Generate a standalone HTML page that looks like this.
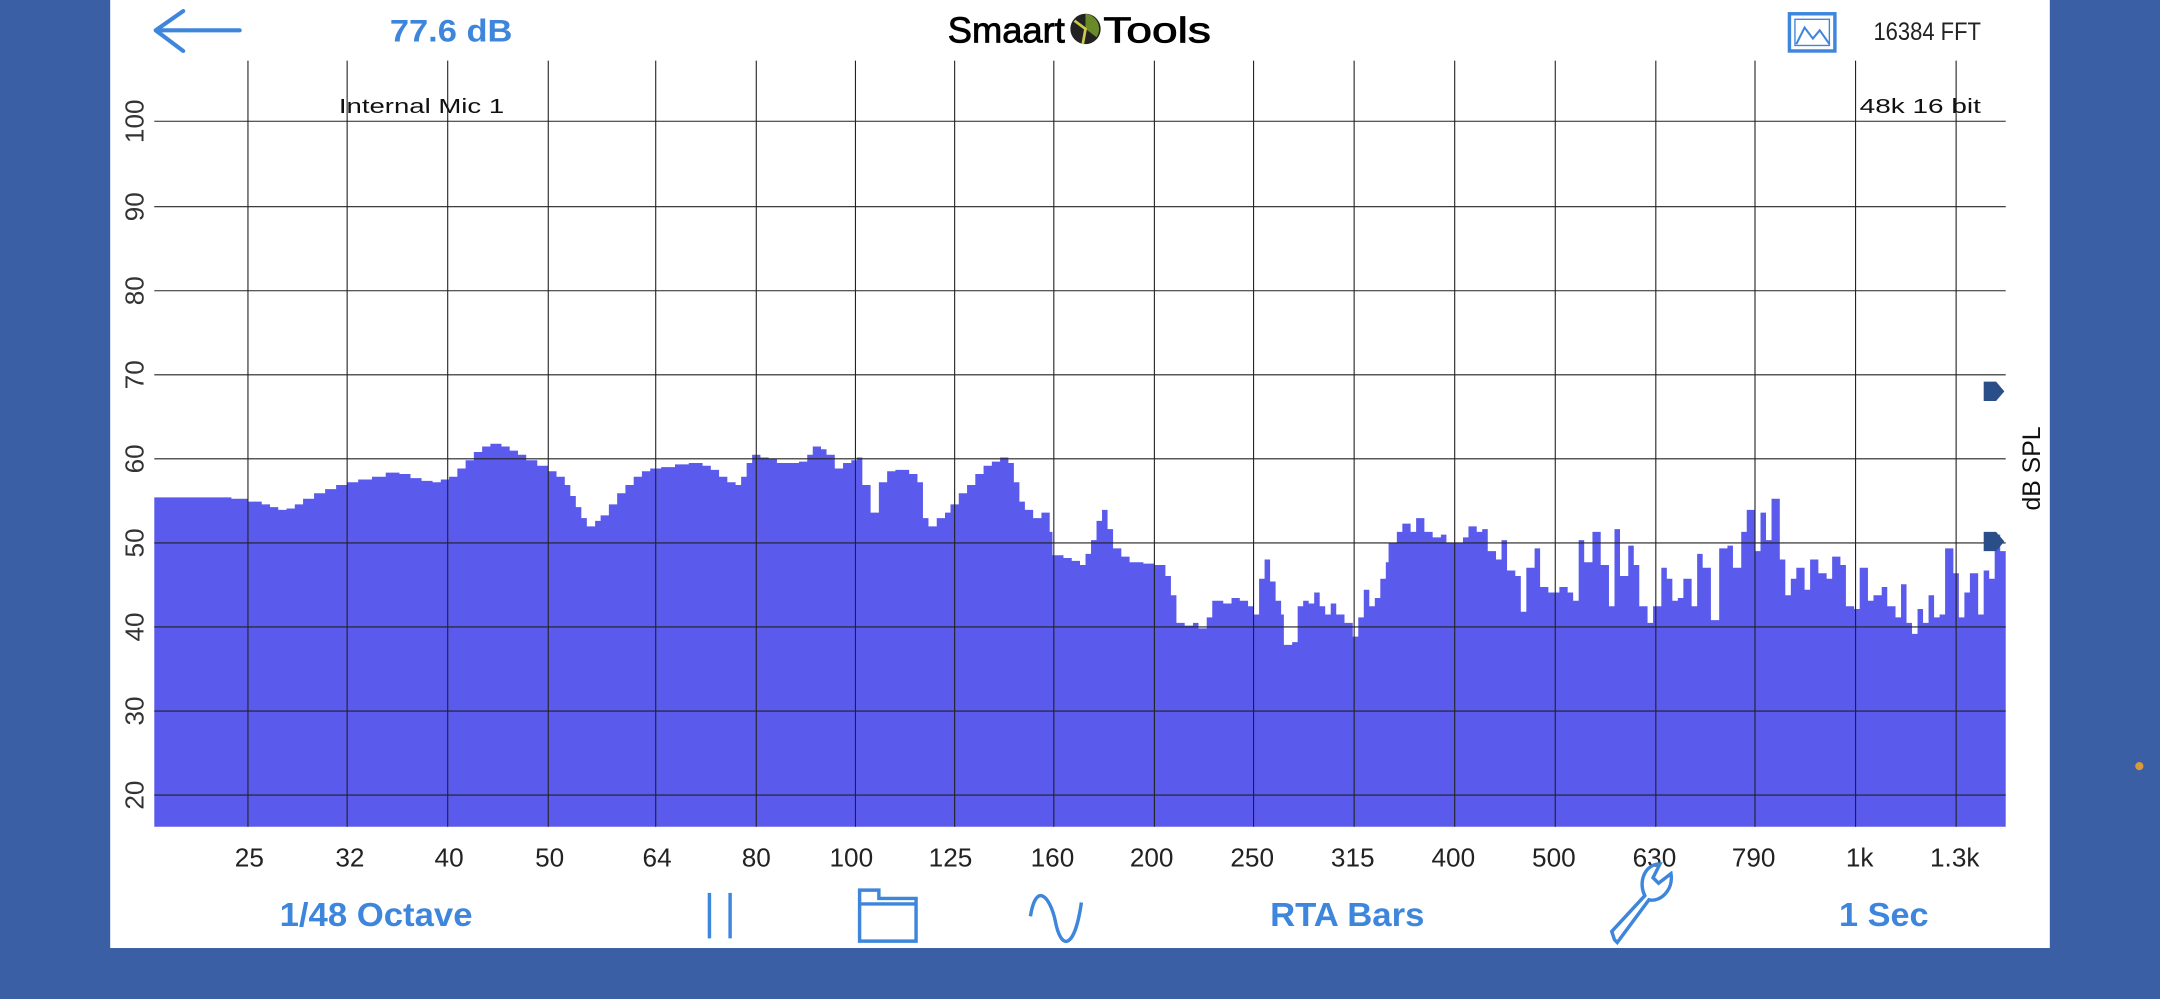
<!DOCTYPE html>
<html><head><meta charset="utf-8"><style>
html,body{margin:0;padding:0;background:#3a5fa5;width:2160px;height:999px;overflow:hidden}
svg{display:block}
text{font-family:"Liberation Sans",Arial,sans-serif}
</style></head><body>
<svg width="2160" height="999" viewBox="0 0 1568 725" preserveAspectRatio="none">
<rect x="0" y="0" width="1568" height="725" fill="#3a5fa5"/>
<rect x="80" y="0" width="1408" height="688" fill="#fff"/>
<path fill="#5a5bec" d="M112,600 V361 H168 V362 H180 V364 H190 V366 H196 V368 H202 V370 H208 V369 H214 V366 H220 V362 H228 V358 H236 V355 H244 V352 H252 V350 H260 V348 H270 V346 H280 V343 H290 V344 H298 V347 H306 V349 H314 V350 H320 V348 H326 V346 H332 V340 H338 V334 H344 V328 H350 V324 H356 V322 H364 V324 H370 V327 H376 V330 H382 V334 H390 V338 H398 V342 H404 V346 H410 V352 H414 V360 H418 V368 H422 V376 H426 V382 H432 V378 H436 V374 H442 V366 H448 V358 H454 V352 H460 V346 H466 V342 H472 V340 H480 V339 H490 V337 H500 V336 H510 V338 H516 V341 H522 V346 H528 V350 H534 V352 H538 V346 H542 V336 H546 V330 H552 V332 H558 V333 H564 V336 H570 V336 H580 V335 H586 V330 H590 V324 H596 V326 H600 V330 H606 V340 H612 V336 H618 V334 H622 V332 H626 V352 H632 V372 H638 V350 H644 V342 H650 V341 H660 V344 H666 V350 H670 V376 H674 V382 H680 V376 H686 V372 H690 V366 H696 V358 H702 V352 H708 V344 H714 V338 H720 V335 H726 V332 H732 V336 H736 V350 H740 V364 H744 V370 H750 V376 H756 V372 H762 V386 H764 V403 H772 V405 H778 V407 H784 V410 H788 V402 H792 V392 H796 V378 H800 V370 H804 V384 H808 V398 H814 V404 H820 V408 H830 V409 H838 V410 H846 V418 H850 V432 H854 V452 H860 V454 H866 V452 H870 V456 H876 V448 H880 V436 H888 V438 H894 V434 H900 V436 H906 V440 H910 V446 H914 V420 H918 V406 H922 V422 H926 V436 H930 V446 H932 V468 H938 V466 H942 V440 H946 V436 H950 V438 H954 V430 H958 V440 H962 V446 H966 V438 H970 V446 H976 V452 H982 V462 H986 V448 H990 V428 H994 V440 H998 V434 H1002 V420 H1006 V408 H1008 V394 H1014 V386 H1018 V380 H1024 V386 H1028 V376 H1034 V386 H1040 V390 H1046 V388 H1050 V394 H1056 V394 H1062 V390 H1066 V382 H1072 V386 H1076 V384 H1080 V400 H1086 V406 H1090 V392 H1094 V414 H1100 V418 H1104 V444 H1108 V412 H1114 V398 H1118 V426 H1124 V430 H1132 V426 H1138 V430 H1142 V436 H1146 V392 H1150 V408 H1156 V386 H1162 V410 H1168 V440 H1172 V384 H1176 V418 H1182 V396 H1186 V410 H1190 V440 H1196 V452 H1200 V440 H1206 V412 H1210 V420 H1214 V436 H1218 V434 H1222 V420 H1228 V440 H1232 V402 H1236 V412 H1242 V450 H1248 V398 H1254 V396 H1258 V412 H1264 V386 H1268 V370 H1274 V400 H1278 V372 H1282 V392 H1286 V362 H1292 V406 H1296 V432 H1300 V420 H1304 V412 H1310 V428 H1314 V406 H1320 V416 H1326 V420 H1330 V404 H1336 V410 H1340 V440 H1346 V442 H1350 V412 H1356 V436 H1360 V432 H1366 V426 H1370 V440 H1376 V448 H1380 V424 H1384 V452 H1388 V460 H1392 V442 H1396 V452 H1400 V432 H1404 V448 H1408 V446 H1412 V398 H1418 V416 H1422 V448 H1426 V430 H1430 V416 H1436 V446 H1440 V414 H1444 V420 H1448 V388 H1452 V400 H1456 V600 Z"/>
<g stroke="#222" stroke-width="0.8">
<line x1="112" y1="88" x2="1456" y2="88"/><line x1="112" y1="150" x2="1456" y2="150"/><line x1="112" y1="211" x2="1456" y2="211"/><line x1="112" y1="272" x2="1456" y2="272"/><line x1="112" y1="333" x2="1456" y2="333"/><line x1="112" y1="394" x2="1456" y2="394"/><line x1="112" y1="455" x2="1456" y2="455"/><line x1="112" y1="516" x2="1456" y2="516"/><line x1="112" y1="577" x2="1456" y2="577"/>
<line x1="180" y1="44" x2="180" y2="600"/><line x1="252" y1="44" x2="252" y2="600"/><line x1="325" y1="44" x2="325" y2="600"/><line x1="398" y1="44" x2="398" y2="600"/><line x1="476" y1="44" x2="476" y2="600"/><line x1="549" y1="44" x2="549" y2="600"/><line x1="621" y1="44" x2="621" y2="600"/><line x1="693" y1="44" x2="693" y2="600"/><line x1="765" y1="44" x2="765" y2="600"/><line x1="838" y1="44" x2="838" y2="600"/><line x1="910" y1="44" x2="910" y2="600"/><line x1="983" y1="44" x2="983" y2="600"/><line x1="1056" y1="44" x2="1056" y2="600"/><line x1="1129" y1="44" x2="1129" y2="600"/><line x1="1202" y1="44" x2="1202" y2="600"/><line x1="1274" y1="44" x2="1274" y2="600"/><line x1="1347" y1="44" x2="1347" y2="600"/><line x1="1420" y1="44" x2="1420" y2="600"/>
</g>
<g font-size="19" fill="#333" text-anchor="middle">
<text transform="translate(104,88) rotate(-90)">100</text>
<text transform="translate(104,150) rotate(-90)">90</text>
<text transform="translate(104,211) rotate(-90)">80</text>
<text transform="translate(104,272) rotate(-90)">70</text>
<text transform="translate(104,333) rotate(-90)">60</text>
<text transform="translate(104,394) rotate(-90)">50</text>
<text transform="translate(104,455) rotate(-90)">40</text>
<text transform="translate(104,516) rotate(-90)">30</text>
<text transform="translate(104,577) rotate(-90)">20</text>
</g>
<text x="246" y="82" font-size="15" fill="#111" textLength="120" lengthAdjust="spacingAndGlyphs">Internal Mic 1</text>
<text x="1350" y="82" font-size="15" fill="#111" textLength="88" lengthAdjust="spacingAndGlyphs">48k 16 bit</text>
<text transform="translate(1481,340) rotate(-90)" font-size="18" fill="#111" text-anchor="middle">dB SPL</text>
<path d="M1440,277 L1449,277 L1455,284 L1449,291 L1440,291 Z" fill="#2a4f88"/>
<path d="M1440,386 L1449,386 L1455,393 L1449,400 L1440,400 Z" fill="#2a4f88"/>
<circle cx="1553" cy="556" r="3" fill="#d89a3a"/>
<g font-size="19" fill="#222" text-anchor="middle">
<text x="181" y="629">25</text><text x="254" y="629">32</text><text x="326" y="629">40</text><text x="399" y="629">50</text><text x="477" y="629">64</text><text x="549" y="629">80</text><text x="618" y="629">100</text><text x="690" y="629">125</text><text x="764" y="629">160</text><text x="836" y="629">200</text><text x="909" y="629">250</text><text x="982" y="629">315</text><text x="1055" y="629">400</text><text x="1128" y="629">500</text><text x="1201" y="629">630</text><text x="1273" y="629">790</text><text x="1350" y="629">1k</text><text x="1419" y="629">1.3k</text>
</g>
<path d="M174,22 H113 M133,8 L113,22 L133,37" stroke="#3e86dc" stroke-width="3" fill="none" stroke-linecap="round" stroke-linejoin="round"/>
<text x="283" y="30" font-size="23" font-weight="bold" fill="#3e86dc" textLength="89" lengthAdjust="spacingAndGlyphs">77.6 dB</text>
<text x="688" y="31" font-size="26" fill="#000" textLength="85" lengthAdjust="spacingAndGlyphs" stroke="#000" stroke-width="0.6">Smaart</text>
<circle cx="788" cy="21" r="11" fill="#222"/><path d="M788,10 A11,11 0 0 1 796,27 L788,21 Z" fill="#6a8a2a"/><path d="M780,15 L788,21 L786,32" stroke="#c9c94a" stroke-width="2" fill="none"/>
<text x="801" y="31" font-size="26" fill="#000" textLength="78" lengthAdjust="spacingAndGlyphs" stroke="#000" stroke-width="0.6">Tools</text>
<rect x="1299" y="10" width="33" height="27" fill="none" stroke="#3e86dc" stroke-width="2.5"/>
<rect x="1303" y="14" width="25" height="19" fill="none" stroke="#3e86dc" stroke-width="1"/>
<path d="M1304,32 L1310,20 L1316,28 L1321,22 L1328,32" stroke="#3e86dc" stroke-width="1.5" fill="none"/>
<text x="1360" y="29" font-size="18" fill="#222" textLength="78" lengthAdjust="spacingAndGlyphs">16384 FFT</text>
<g font-size="24" font-weight="bold" fill="#3e86dc">
<text x="203" y="672" textLength="140" lengthAdjust="spacingAndGlyphs">1/48 Octave</text>
<text x="922" y="672" textLength="112" lengthAdjust="spacingAndGlyphs">RTA Bars</text>
<text x="1335" y="672" textLength="65" lengthAdjust="spacingAndGlyphs">1 Sec</text>
</g>
<g stroke="#3e86dc" stroke-width="2.5" fill="none">
<line x1="515" y1="648" x2="515" y2="681"/><line x1="530" y1="648" x2="530" y2="681"/>
<path d="M624,646 H638 V652 H665 V683 H624 Z M624,656 H665"/>
<path d="M748,665 C752,640 762,650 766,668 C770,690 780,690 785,655" />
<path d="M1172,682 L1170,676 L1194,650 C1189,640 1194,627 1205,627 L1200,637 L1204,641 L1213,634 C1215,646 1205,655 1197,653 L1174,684 Z"/>
</g>
</svg>
</body></html>
